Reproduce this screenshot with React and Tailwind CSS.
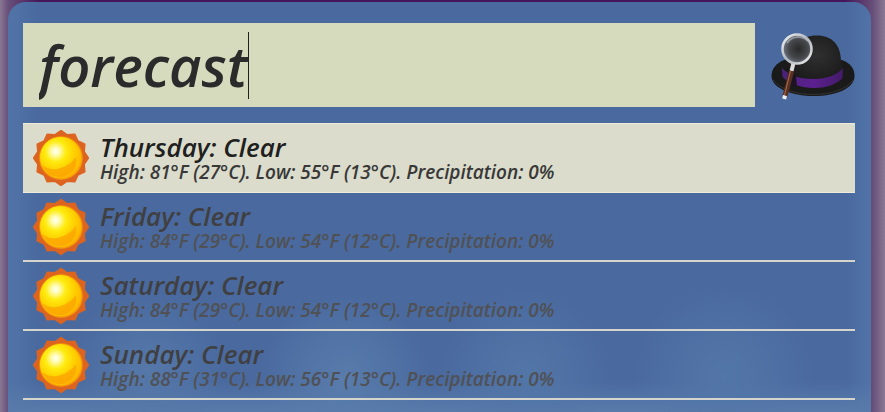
import React from "react";

const days = [
  { day: "Thursday", high: "81°F (27°C)", low: "55°F (13°C)" },
  { day: "Friday", high: "84°F (29°C)", low: "54°F (12°C)" },
  { day: "Saturday", high: "84°F (29°C)", low: "54°F (12°C)" },
  { day: "Sunday", high: "88°F (31°C)", low: "56°F (13°C)" },
];

const rays = Array.from({ length: 24 }, (_, i) => {
  const r = i % 2 ? 24 : 27.5;
  const a = (i * Math.PI) / 12;
  return `${(28 + r * Math.sin(a)).toFixed(2)},${(28 - r * Math.cos(a)).toFixed(2)}`;
}).join(" ");

function Sun() {
  return (
    <svg viewBox="0 0 56 56" className="size-14 shrink-0" aria-hidden="true">
      <defs>
        <radialGradient id="sunFace" cx="0.38" cy="0.35" r="0.7">
          <stop offset="0" stopColor="#fffff0" />
          <stop offset="0.12" stopColor="#fffcc0" />
          <stop offset="0.36" stopColor="#ffec10" />
          <stop offset="0.65" stopColor="#ffd000" />
          <stop offset="1" stopColor="#ffb400" />
        </radialGradient>
        <radialGradient id="sunGlow" cx="0.5" cy="0.5" r="0.5">
          <stop offset="0.88" stopColor="#ffb800" />
          <stop offset="1" stopColor="#ee8410" />
        </radialGradient>
      </defs>
      <polygon points={rays} fill="#dc6420" stroke="#dc6420" strokeWidth="1.5" strokeLinejoin="round" />
      <circle cx="28" cy="28" r="22" fill="url(#sunGlow)" />
      <circle cx="27.5" cy="27.5" r="20.5" fill="url(#sunFace)" />
      <path d="M9 35 C19 43 34 39 43 27 C45 39 36 47 27 47 C18 47 12 42 9 35Z" fill="#fba000" opacity="0.7" />
    </svg>
  );
}

function Hat() {
  return (
    <svg viewBox="0 0 84 70" className="h-[70px] w-[84px] shrink-0" role="img" aria-label="Bowler hat with magnifying glass">
      <defs>
        <radialGradient id="crown" cx="0.55" cy="0.4" r="0.65">
          <stop offset="0" stopColor="#303030" />
          <stop offset="1" stopColor="#171717" />
        </radialGradient>
        <radialGradient id="lens" cx="0.55" cy="0.5" r="0.6">
          <stop offset="0" stopColor="#292929" />
          <stop offset="0.55" stopColor="#45474a" />
          <stop offset="1" stopColor="#7d8796" />
        </radialGradient>
        <linearGradient id="rim" x1="0" y1="0" x2="1" y2="1">
          <stop offset="0" stopColor="#f4f4f4" />
          <stop offset="0.5" stopColor="#aeb5bd" />
          <stop offset="1" stopColor="#efefef" />
        </linearGradient>
        <linearGradient id="band">
          <stop offset="0" stopColor="#4b2278" />
          <stop offset="0.5" stopColor="#5c2090" />
          <stop offset="1" stopColor="#431b69" />
        </linearGradient>
      </defs>
      <path d="M0.5 46 C0.5 38 6 33 13 30 L71 30 C79 33 83.5 38 83.5 46 C83.5 58 66 66 43 66 C20 66 0.5 58 0.5 46Z" fill="#1a1a1a" />
      <path d="M2 50 C10 60 26 64.5 43 64.5 C61 64.5 76 59 82 50" fill="none" stroke="#333333" />
      <path d="M14 38 C18 16 30 5.5 46 5.5 C61 5.5 70 15 70 31 L72 39 L69 50 C52 57 28 56 14 48Z" fill="url(#crown)" />
      <path d="M11 38 C18 46 30 49 43 49 C56 49 66 45 72 38 L71.5 48 C65 55 54 58 43 58 C30 58 19 54 11.5 47Z" fill="url(#band)" />
      <path d="M25 46 L26 57 L16 53 L17 43Z" fill="#1d1325" />
      <path d="M22.5 33 L20.5 41" stroke="#dcdcdc" strokeWidth="4" />
      <path d="M20.5 41 L14 66" stroke="#5a3020" strokeWidth="5" />
      <path d="M19.5 41 L13.5 65" stroke="#a66d50" />
      <path d="M14 65.5 L13.2 69" stroke="#efefef" strokeWidth="4" />
      <circle cx="26" cy="19" r="14.5" fill="url(#lens)" stroke="url(#rim)" strokeWidth="2.5" />
      <path d="M16 13 C20 6 31 5 37 11" stroke="#c6ccd4" strokeWidth="2" fill="none" opacity="0.5" />
    </svg>
  );
}

function Row({ item, selected }) {
  return (
    <li>
      <button
        type="button"
        className={
          selected
            ? "flex h-[70px] w-full items-center gap-[11px] border-y border-[#eeecd8] bg-[#dbdccb] pl-[10px] text-left"
            : "flex h-[69px] w-full items-center gap-[11px] border-b-2 border-[#d5d5cd] pl-[10px] text-left"
        }
      >
        <Sun />
        <span className="flex min-w-0 flex-col">
          <span className={selected ? "text-[26px] leading-[28px] text-[#202020]" : "text-[26px] leading-[28px] text-[#404042]"}>
            {item.day}: Clear
          </span>
          <span className={selected ? "text-[19px] leading-[22px] text-[#383838]" : "text-[19px] leading-[22px] text-[#505154]"}>
            High: {item.high}. Low: {item.low}. Precipitation: 0%
          </span>
        </span>
      </button>
    </li>
  );
}

export default function App() {
  return (
    <div className="min-h-screen bg-[linear-gradient(to_right,#8a7894,#68507a_8px,#45175a_40px,#45175a_calc(100%-40px),#68507a_calc(100%-12px),#8a7894)] pt-[2px] pr-[14px] pl-2 font-['Open_Sans','Noto_Sans',sans-serif] font-semibold italic">
      <main className="min-h-[410px] rounded-t-[18px] bg-[#4a6a9f] bg-[radial-gradient(circle_at_16%_90%,#5578a9,transparent_80px),radial-gradient(circle_at_39%_92%,#587cac,transparent_85px),radial-gradient(circle_at_60%_91%,#5376a8,transparent_85px),radial-gradient(circle_at_83%_91%,#5376a8,transparent_90px),linear-gradient(to_top,#587bab,transparent_30px),linear-gradient(to_right,#5174a8,transparent_30px,transparent_calc(100%-24px),#5173a8)] pt-[21px] pr-4 pl-[15px]">
        <div className="flex items-center gap-4">
          <label className="flex h-[84px] min-w-0 flex-1 items-center bg-[#d6dbbd] pl-2">
            <input
              type="text"
              aria-label="Search"
              defaultValue="forecast"
              className="field-sizing-content h-[82px] bg-transparent pl-2 text-[56px] text-[#2b2b2b] caret-transparent outline-none"
            />
            <span className="h-[67px] w-px bg-[#202020]" />
          </label>
          <Hat />
        </div>
        <ul className="mt-4">
          {days.map((item, i) => (
            <Row key={item.day} item={item} selected={i === 0} />
          ))}
        </ul>
      </main>
    </div>
  );
}
